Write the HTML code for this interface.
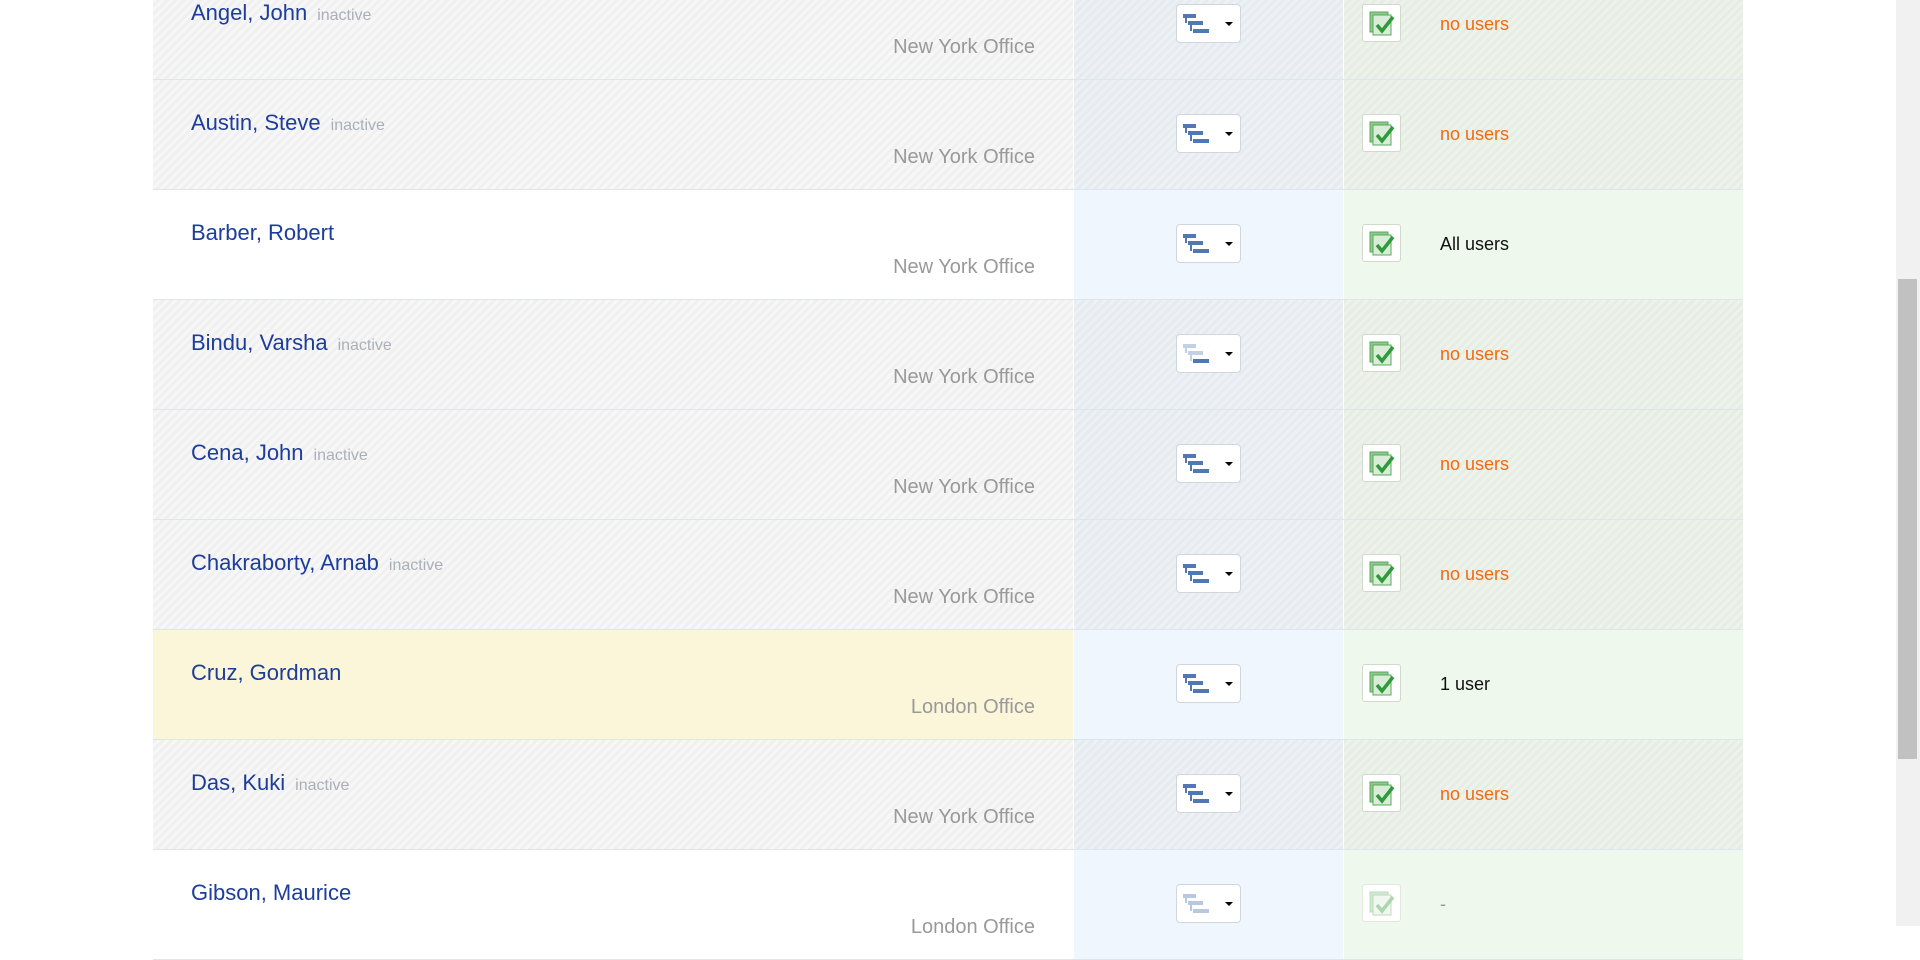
<!DOCTYPE html>
<html><head><meta charset="utf-8"><style>
*{margin:0;padding:0;box-sizing:border-box}
body{width:1920px;height:926px;overflow:hidden;background:#fff;font-family:"Liberation Sans",Arial,sans-serif;position:relative}
.row{position:absolute;left:153px;width:1590px;height:110px;border-bottom:1px solid #dde6ef}
.c1,.c2,.c3{position:absolute;top:0;height:100%}
.c1{left:0;width:920px}
.c2{left:920px;width:270px;border-left:1px solid #fff}
.c3{left:1190px;width:400px;border-left:1px solid #fff}
.inact .c1{background:repeating-linear-gradient(135deg,#f0f0f0 0 3px,#f7f7f7 3px 6px)}
.inact .c2{background:repeating-linear-gradient(135deg,#e6ebf0 0 3px,#edf1f5 3px 6px)}
.inact .c3{background:repeating-linear-gradient(135deg,#e6ede4 0 3px,#edf3eb 3px 6px)}
.act .c1{background:#fff}
.act .c2{background:#eff6fd}
.act .c3{background:#eef8ec}
.yel .c1{background:#fbf5da}
.name{position:absolute;left:38px;top:30px;font-size:22px;color:#1d3d9a;white-space:nowrap}
.name span{font-size:16px;color:#aab0b8;margin-left:10px}
.off{position:absolute;right:38px;top:66px;font-size:20px;color:#999}
.btn{position:absolute;left:102px;top:34px;width:65px;height:39px;background:#fff;border:1px solid #cfd6de;border-radius:4px}
.btn svg{position:absolute;left:0;top:0}
.caret{position:absolute;left:48px;top:17px;width:0;height:0;border-left:4px solid transparent;border-right:4px solid transparent;border-top:4px solid #000}
.chk{position:absolute;left:18px;top:34px;width:39px;height:38px;background:#fff;border:1px solid #d2d8cc;border-radius:3px}
.chk svg{position:absolute;left:6px;top:6px}
.txt{position:absolute;left:96px;top:44px;font-size:18px}
.no{color:#f26a10}.bl{color:#111}
.fade svg{opacity:.4}
</style></head><body>
<svg width="0" height="0" style="position:absolute"><defs>
<g id="tree"><rect x="6" y="9" width="13" height="4" fill="#4f78b4"/><rect x="11" y="16" width="15" height="4" fill="#4f78b4"/><rect x="16" y="24" width="16" height="4" fill="#4f78b4"/><rect x="8" y="13" width="2" height="5" fill="#4f78b4"/><rect x="13" y="20" width="2" height="6" fill="#4f78b4"/></g>
<g id="treef"><rect x="6" y="9" width="13" height="4" fill="#c3d1e6"/><rect x="11" y="16" width="15" height="4" fill="#c3d1e6"/><rect x="16" y="24" width="16" height="4" fill="#4f78b4"/><rect x="8" y="13" width="2" height="5" fill="#c3d1e6"/><rect x="13" y="20" width="2" height="6" fill="#c3d1e6"/></g>
<g id="ck"><rect x="1" y="1" width="18" height="20" fill="#8fc98f" stroke="#5aa85a"/><rect x="4" y="4" width="18" height="20" fill="#d8ecd8" stroke="#5aa85a"/><path d="M8 14 L13 20 L24 6" stroke="#2f9a3a" stroke-width="3.5" fill="none"/></g>
</defs></svg>

<div class="row inact" style="top:-30px"><div class="c1"><div class="name">Angel, John<span>inactive</span></div><div class="off">New York Office</div></div><div class="c2"><div class="btn"><svg width="40" height="37"><use href="#tree"/></svg><div class="caret"></div></div></div><div class="c3"><div class="chk"><svg width="26" height="26"><use href="#ck"/></svg></div><div class="txt no">no users</div></div></div>

<div class="row inact" style="top:80px"><div class="c1"><div class="name">Austin, Steve<span>inactive</span></div><div class="off">New York Office</div></div><div class="c2"><div class="btn"><svg width="40" height="37"><use href="#tree"/></svg><div class="caret"></div></div></div><div class="c3"><div class="chk"><svg width="26" height="26"><use href="#ck"/></svg></div><div class="txt no">no users</div></div></div>

<div class="row act" style="top:190px"><div class="c1"><div class="name">Barber, Robert</div><div class="off">New York Office</div></div><div class="c2"><div class="btn"><svg width="40" height="37"><use href="#tree"/></svg><div class="caret"></div></div></div><div class="c3"><div class="chk"><svg width="26" height="26"><use href="#ck"/></svg></div><div class="txt bl">All users</div></div></div>

<div class="row inact" style="top:300px"><div class="c1"><div class="name">Bindu, Varsha<span>inactive</span></div><div class="off">New York Office</div></div><div class="c2"><div class="btn"><svg width="40" height="37"><use href="#treef"/></svg><div class="caret"></div></div></div><div class="c3"><div class="chk"><svg width="26" height="26"><use href="#ck"/></svg></div><div class="txt no">no users</div></div></div>

<div class="row inact" style="top:410px"><div class="c1"><div class="name">Cena, John<span>inactive</span></div><div class="off">New York Office</div></div><div class="c2"><div class="btn"><svg width="40" height="37"><use href="#tree"/></svg><div class="caret"></div></div></div><div class="c3"><div class="chk"><svg width="26" height="26"><use href="#ck"/></svg></div><div class="txt no">no users</div></div></div>

<div class="row inact" style="top:520px"><div class="c1"><div class="name">Chakraborty, Arnab<span>inactive</span></div><div class="off">New York Office</div></div><div class="c2"><div class="btn"><svg width="40" height="37"><use href="#tree"/></svg><div class="caret"></div></div></div><div class="c3"><div class="chk"><svg width="26" height="26"><use href="#ck"/></svg></div><div class="txt no">no users</div></div></div>

<div class="row act yel" style="top:630px"><div class="c1"><div class="name">Cruz, Gordman</div><div class="off">London Office</div></div><div class="c2"><div class="btn"><svg width="40" height="37"><use href="#tree"/></svg><div class="caret"></div></div></div><div class="c3"><div class="chk"><svg width="26" height="26"><use href="#ck"/></svg></div><div class="txt bl">1 user</div></div></div>

<div class="row inact" style="top:740px"><div class="c1"><div class="name">Das, Kuki<span>inactive</span></div><div class="off">New York Office</div></div><div class="c2"><div class="btn"><svg width="40" height="37"><use href="#tree"/></svg><div class="caret"></div></div></div><div class="c3"><div class="chk"><svg width="26" height="26"><use href="#ck"/></svg></div><div class="txt no">no users</div></div></div>

<div class="row act" style="top:850px"><div class="c1"><div class="name">Gibson, Maurice</div><div class="off">London Office</div></div><div class="c2"><div class="btn fade"><svg width="40" height="37"><use href="#tree"/></svg><div class="caret"></div></div></div><div class="c3"><div class="chk fade" style="border-color:#e2e8dc"><svg width="26" height="26"><use href="#ck"/></svg></div><div class="txt" style="color:#999">-</div></div></div>

<div style="position:absolute;left:1896px;top:0;width:24px;height:926px;background:#f1f1f1"></div>
<div style="position:absolute;left:1898px;top:279px;width:19px;height:480px;background:#c1c1c1"></div>
</body></html>
